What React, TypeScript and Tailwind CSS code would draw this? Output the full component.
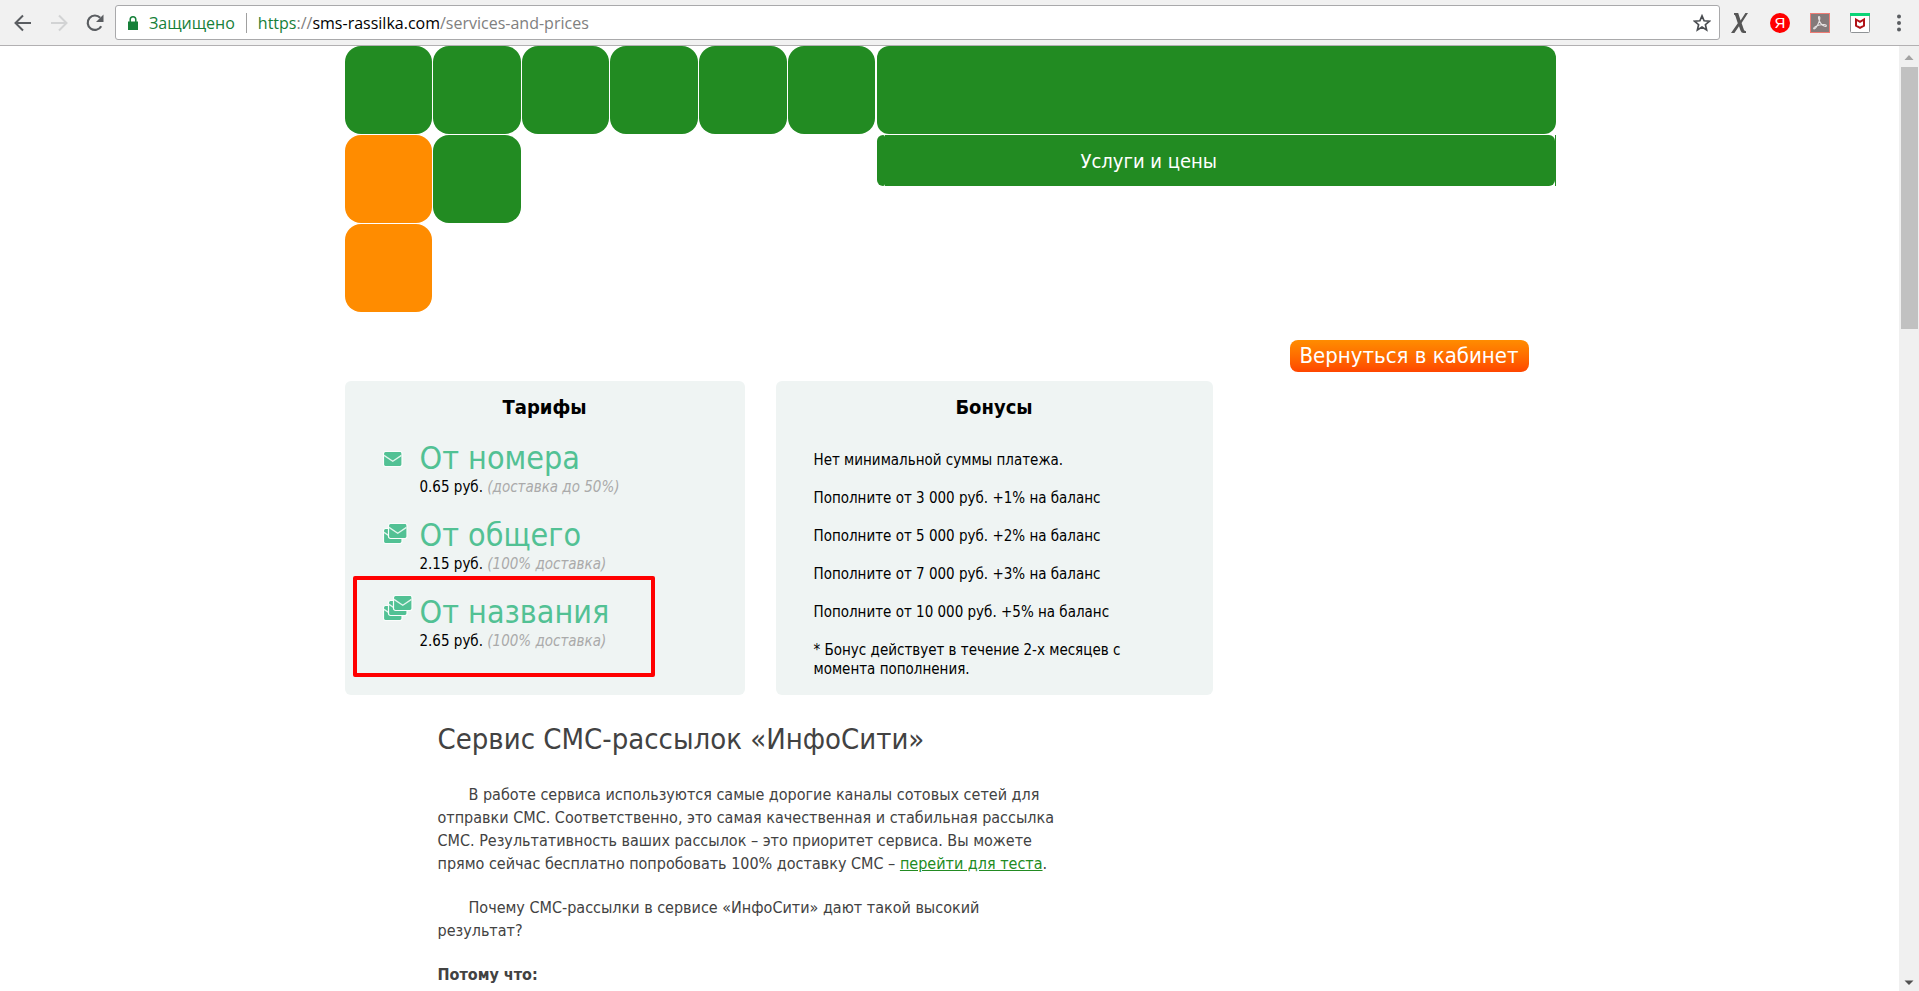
import React from 'react';

interface Tariff {
  name: string;
  price: string;
  note: string;
  layers: number;
}

const TARIFFS: Tariff[] = [
  { name: 'От номера', price: '0.65 руб.', note: '(доставка до 50%)', layers: 1 },
  { name: 'От общего', price: '2.15 руб.', note: '(100% доставка)', layers: 2 },
  { name: 'От названия', price: '2.65 руб.', note: '(100% доставка)', layers: 3 },
];

const BONUSES = [
  'Нет минимальной суммы платежа.',
  'Пополните от 3 000 руб. +1% на баланс',
  'Пополните от 5 000 руб. +2% на баланс',
  'Пополните от 7 000 руб. +3% на баланс',
  'Пополните от 10 000 руб. +5% на баланс',
];

// g = green, o = orange, - = empty cell
const TILES = ['g', 'g', 'g', 'g', 'g', 'g', 'o', 'g', '-', '-', '-', '-', 'o'];

const TILE_COLORS: Record<string, string> = {
  g: 'bg-[#228b22]',
  o: 'bg-[#ff8c00]',
  '-': '',
};

const Envelope: React.FC<{ x: number; y: number }> = ({ x, y }) => (
  <g transform={`translate(${x} ${y})`}>
    <rect x="0.5" y="0.5" width="18.5" height="15" rx="2" fill="#52c194" stroke="#fbfdfc" strokeWidth="1.2" />
    <path d="M1 4.4 L9.75 10.2 L18.5 4.4" fill="none" stroke="#e3f5ed" strokeWidth="1.3" />
  </g>
);

const MailIcon: React.FC<{ layers: number }> = ({ layers }) => {
  const h = 16 + (layers - 1) * 5;
  return (
    <svg width="30" height={h} viewBox={`0 0 30 ${h}`} aria-hidden="true">
      {Array.from({ length: layers }, (_, i) => (
        <Envelope key={i} x={i * 5} y={(layers - 1 - i) * 5} />
      ))}
    </svg>
  );
};

const BrowserBar: React.FC = () => (
  <header className="flex h-[46px] shrink-0 items-center border-b border-[#b2b0b2] bg-[#f1f1f1] pr-[11px] pl-3">
    <div className="flex w-[103px] items-center gap-[14px]">
      <button aria-label="Назад">
        <svg width="22" height="22" viewBox="0 0 22 22" fill="none" stroke="#5a5d61" strokeWidth="2">
          <path d="M19 11 H4 M11 3.5 L3.5 11 L11 18.5" />
        </svg>
      </button>
      <button aria-label="Вперёд">
        <svg width="22" height="22" viewBox="0 0 22 22" fill="none" stroke="#d2d3d4" strokeWidth="2">
          <path d="M3 11 H18 M11 3.5 L18.5 11 L11 18.5" />
        </svg>
      </button>
      <button aria-label="Обновить">
        <svg width="22" height="22" viewBox="0 0 22 22">
          <path d="M17.2 14.2 A7.2 7.2 0 1 1 16.2 5.8" fill="none" stroke="#5a5d61" strokeWidth="2.2" />
          <path d="M19.5 2.5 V10 H12 Z" fill="#5a5d61" />
        </svg>
      </button>
    </div>

    <div className="flex h-[35px] min-w-0 flex-1 items-center rounded-[3px] border border-[#a9a9ab] bg-white pr-2 pl-3 font-['Open_Sans','Noto_Sans',sans-serif] text-[16px]">
      <svg width="10" height="14" viewBox="0 0 10 14" className="mr-[11px]">
        <path d="M0 5.5 H10 V14 H0 Z" fill="#168039" />
        <path d="M2.2 6 V3.6 A2.8 2.8 0 0 1 7.8 3.6 V6" fill="none" stroke="#168039" strokeWidth="1.5" />
      </svg>
      <span className="text-[#168039]">Защищено</span>
      <span className="mx-[11px] h-5 w-px bg-[#a0a0a0]" />
      <p className="min-w-0 flex-1 truncate text-[#808080]">
        <span className="text-[#168039]">https</span>://<span className="text-black">sms-rassilka.com</span>/services-and-prices
      </p>
      <button aria-label="Добавить в закладки">
        <svg width="18" height="18" viewBox="0 0 18 18" fill="none" stroke="#4a4d51" strokeWidth="1.7">
          <path d="M9 1.9 L11.1 6.8 L16.4 7.2 L12.4 10.7 L13.6 15.9 L9 13.1 L4.4 15.9 L5.6 10.7 L1.6 7.2 L6.9 6.8 Z" />
        </svg>
      </button>
    </div>

    <div className="flex items-center gap-5 pl-[10px]">
      <button aria-label="Расширение X">
        <svg width="20" height="20" viewBox="0 0 20 20" fill="#565656">
          <path d="M4 0 H8.2 L10.6 7.4 L15.4 0 H18 L11.6 10 L14 17 Q14.4 18 16 18.2 V20 H13.4 Q11.4 20 10.6 17.8 L9 13.2 L4.4 20 H1 L7.8 10.2 L5.4 3 Q5 1.8 4 1.8 Z" />
        </svg>
      </button>
      <button aria-label="Яндекс" className="flex size-5 items-center justify-center rounded-full bg-[#ff0000] font-['Liberation_Sans',sans-serif] text-[15px] leading-5 text-white">
        Я
      </button>
      <button aria-label="Adobe Acrobat">
        <svg width="20" height="20" viewBox="0 0 20 20">
          <rect x="0.5" y="0.5" width="19" height="19" fill="#857a7a" stroke="#ee7b74" />
          <path
            d="M9 3.5 C10.5 3.5 9.8 7.5 8.2 10.8 C6.8 13.8 4.8 16.2 3.8 15.8 C2.8 15 6 12.8 9.5 12 C13 11.2 16.4 11.4 16.4 12.8 C16 14.2 12.6 12.8 10.8 10.4 C9 8 7.8 3.6 9 3.5 Z"
            fill="none"
            stroke="#e6e2e2"
            strokeWidth="1.1"
          />
        </svg>
      </button>
      <button aria-label="McAfee">
        <svg width="20" height="20" viewBox="0 0 20 20">
          <rect x="0.5" y="0.5" width="19" height="19" rx="1" fill="#fff" stroke="#8f9396" />
          <path d="M0 0 H20 V3 H0 Z" fill="#0bd477" />
          <path d="M6 6.5 L10 8.8 L14 6.5 V12.6 L10 14.8 L6 12.6 Z" fill="none" stroke="#b01217" strokeWidth="2" />
        </svg>
      </button>
      <button aria-label="Меню">
        <svg width="18" height="18" viewBox="0 0 18 18" fill="#5a5d61">
          <circle cx="9" cy="2.5" r="2" />
          <circle cx="9" cy="9" r="2" />
          <circle cx="9" cy="15.5" r="2" />
        </svg>
      </button>
    </div>
  </header>
);

const TileHeader: React.FC = () => (
  <div className="flex items-start gap-px">
    <div className="grid w-[531px] shrink-0 grid-cols-6 gap-px">
      {TILES.map((tile, i) => (
        <div key={i} className={`h-[88px] rounded-2xl ${TILE_COLORS[tile]}`} />
      ))}
    </div>
    <div className="flex min-w-0 flex-1 flex-col gap-px">
      <div className="h-[88px] rounded-xl bg-[#228b22]" />
      {/* the menu strip is made of a left cap, the body and a thin right edge */}
      <nav className="flex h-[51px]">
        <span className="w-2 rounded-l-md rounded-r-[2px] bg-[#228b22]" />
        <div className="flex flex-1 items-center rounded-r-md bg-[#228b22] pl-[196px]">
          <a href="#services" className="text-[20px] text-white">
            Услуги и цены
          </a>
        </div>
        <span className="w-px bg-[#228b22]" />
      </nav>
    </div>
  </div>
);

const TariffCard: React.FC = () => (
  <section className="relative w-[400px] rounded-md bg-[#eff4f3] pt-[14px]">
    <h2 className="text-center text-[20px] leading-6 font-bold">Тарифы</h2>
    <ul className="flex flex-col gap-[19px] pt-5 pl-[38px]">
      {TARIFFS.map((t) => (
        <li key={t.name} className="flex gap-[7px]">
          <div className="flex h-7 w-[30px] items-end">
            <MailIcon layers={t.layers} />
          </div>
          <div>
            <h3 className="text-[32px] leading-[39px] text-[#52c194]">{t.name}</h3>
            <p className="text-[15px] leading-[19px]">
              {t.price} <em className="text-[#aaaaaa]">{t.note}</em>
            </p>
          </div>
        </li>
      ))}
    </ul>
    <div className="absolute top-[195px] left-2 h-[101px] w-[302px] rounded-[2px] border-4 border-[#ff0000]" />
  </section>
);

const BonusCard: React.FC = () => (
  <section className="w-[437px] rounded-md bg-[#eff4f3] pt-[14px] pb-4">
    <h2 className="text-center text-[20px] leading-6 font-bold">Бонусы</h2>
    <div className="flex flex-col gap-[19px] pt-8 pr-12 pl-[38px] text-[15px] leading-[19px]">
      {BONUSES.map((line) => (
        <p key={line}>{line}</p>
      ))}
      <p>
        * Бонус действует в течение 2-х месяцев с<br />
        момента пополнения.
      </p>
    </div>
  </section>
);

const Article: React.FC = () => (
  <article className="flex flex-col gap-[21px] pt-[26px] pl-[93px] text-[16px] leading-[23px] text-[#424242]">
    <h1 className="pb-[5px] text-[29px] leading-9">Сервис СМС-рассылок «ИнфоСити»</h1>
    <p className="indent-[31px]">
      В работе сервиса используются самые дорогие каналы сотовых сетей для
      <br />
      отправки СМС. Соответственно, это самая качественная и стабильная рассылка
      <br />
      СМС. Результативность ваших рассылок – это приоритет сервиса. Вы можете
      <br />
      прямо сейчас бесплатно попробовать 100% доставку СМС –{' '}
      <a href="#test" className="text-[#228b22] underline">
        перейти для теста
      </a>
      .
    </p>
    <p className="indent-[31px]">
      Почему СМС-рассылки в сервисе «ИнфоСити» дают такой высокий
      <br />
      результат?
    </p>
    <p className="font-bold">Потому что:</p>
  </article>
);

const ScrollBar: React.FC = () => (
  <div className="flex w-5 shrink-0 flex-col items-center bg-[#f0f0f0] py-[5px]">
    <svg width="10" height="14" viewBox="0 0 10 14">
      <path d="M0.5 9 H9.5 L5 4 Z" fill="#a3a3a3" />
    </svg>
    <div className="mt-[2px] h-[262px] w-[17px] bg-[#c1c1c1]" />
    <svg width="10" height="6" viewBox="0 0 10 6" className="mt-auto">
      <path d="M0.5 0.5 H9.5 L5 5 Z" fill="#505050" />
    </svg>
  </div>
);

export default function App() {
  return (
    <div className="flex h-screen flex-col overflow-hidden bg-white font-['DejaVu_Sans_Condensed','DejaVu_Sans',sans-serif] text-black">
      <BrowserBar />
      <div className="flex min-h-0 flex-1">
        <main className="min-w-0 flex-1 overflow-hidden pl-px">
          <div className="mx-auto max-w-[1211px]">
            <TileHeader />
            <div className="flex justify-end pt-7 pr-[27px]">
              <button className="h-8 rounded-lg bg-linear-to-b from-[#ff8c00] to-[#ff4500] px-[10px] text-[22px] leading-8 text-white">
                Вернуться в кабинет
              </button>
            </div>
            <div className="flex gap-[31px] pt-[9px]">
              <TariffCard />
              <BonusCard />
            </div>
            <Article />
          </div>
        </main>
        <ScrollBar />
      </div>
    </div>
  );
}
